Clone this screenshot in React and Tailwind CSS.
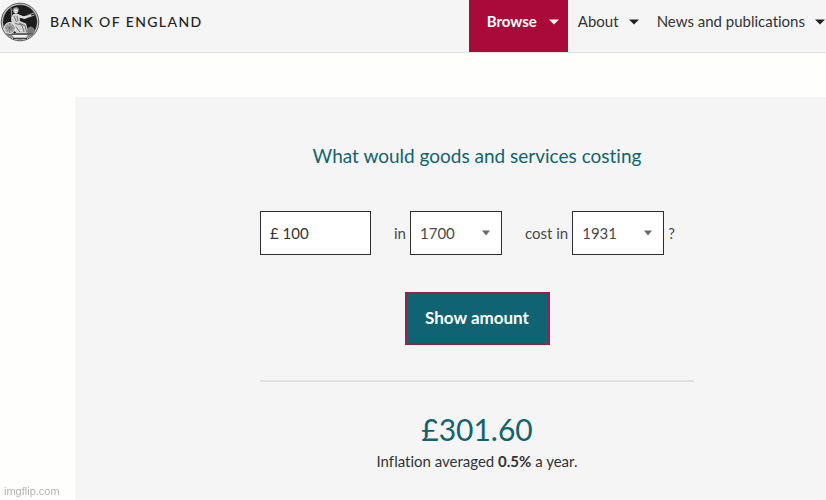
import React, { useState } from "react";

const Logo = () => (
    <svg viewBox="0 0 40 40" className="size-10 shrink-0" aria-hidden="true">
        <circle cx="20" cy="20" r="18.8" fill="#cfcfcf" stroke="#4a4a4a" strokeWidth="0.9" />
        <circle cx="20" cy="20" r="17.2" fill="#1c1c1c" stroke="#888" strokeWidth="0.5" />
        {/* ground */}
        <path d="M5.5 31 H34.5 Q29.5 37.5 20 37.5 Q10.5 37.5 5.5 31Z" fill="#8a8a8a" />
        <path d="M12 33 H28 L26 35.5 H14Z" fill="#f0f0f0" />
        <path d="M7 32 H33 M13 36.5 H27" stroke="#2a2a2a" strokeWidth="0.8" />
        {/* spear */}
        <path d="M11 6 L13 26" stroke="#aaa" strokeWidth="0.9" />
        {/* seated figure */}
        <circle cx="15.8" cy="8.6" r="2.6" fill="#d8d8d8" />
        <path d="M13 9 Q13.5 5.5 17 5.8 L18.5 7.5" stroke="#999" strokeWidth="1.2" fill="none" />
        <path d="M12.8 12.5 L16 11 L19.5 13 L20 19 L26 21.5 L27 25 L28.5 31 L16 31 L12 24 L11 16Z" fill="#d2d2d2" />
        <path d="M17.5 12 L23.5 14.2 L31 12.5 L31.5 14.2 L24.5 17 L18.5 15.5Z" fill="#dedede" />
        <path d="M27 13.5 L34 11 M29 15 L34.5 13" stroke="#b0b0b0" strokeWidth="1" />
        <path d="M14 14 L16.5 20 M17 14 L18 19 M15 21.5 L22 23 L24 30 M19 21 L25 23.5 L26.5 30 M15 24 L20 30" stroke="#4a4a4a" strokeWidth="0.7" fill="none" />
        {/* shield */}
        <circle cx="9.8" cy="26" r="5.5" fill="#adadad" stroke="#eee" strokeWidth="0.9" />
        <path d="M5 26 H14.6 M9.8 21 V31 M6.5 23 L13 29.5 M13 23 L6.5 29.5" stroke="#666" strokeWidth="0.7" />
        {/* coins */}
        <path d="M26.5 31 Q26.5 25 31 24.5 Q35 26 35 30 L34 31Z" fill="#8c8c8c" />
        <path d="M28 28 H34.5 M28 30 H34 M28.5 26 H33" stroke="#444" strokeWidth="0.7" strokeDasharray="1.5 0.7" />
    </svg>
);

const Caret = ({ className }) => (
    <svg viewBox="0 0 10 6" preserveAspectRatio="none" className={className} aria-hidden="true">
        <path d="M0 0.5 H10 L5 5.5Z" fill="currentColor" />
    </svg>
);

const YearSelect = ({ id, value, onChange, years }) => (
    <div className="relative">
        <select
            id={id}
            value={value}
            onChange={onChange}
            className="block h-11 w-[92px] appearance-none border border-[#2d2d2d] bg-white pl-[9px] pr-6 text-[#4a4a4a]"
        >
            {years.map((year) => (
                <option key={year} value={year}>{year}</option>
            ))}
        </select>
        <Caret className="pointer-events-none absolute right-3 top-[19px] h-[6px] w-2 text-[#6a6a6a]" />
    </div>
);

const App = () => {
    const [amount, setAmount] = useState("£ 100");
    const [startYear, setStartYear] = useState("1700");
    const [endYear, setEndYear] = useState("1931");

    return (
        <div className="flex min-h-screen flex-col overflow-x-hidden bg-[#fefefc] font-['Lato',sans-serif] text-[15px] leading-6 text-[#333] [font-variant-ligatures:none]">
            <header className="flex h-[53px] items-start justify-between border-b border-[#e4e4e4] bg-[#f5f5f5]">
                <a href="#" className="flex h-11 items-center gap-[10px] whitespace-nowrap text-sm font-medium tracking-widest text-[#222]">
                    <Logo />
                    BANK OF ENGLAND
                </a>
                <nav className="flex h-[52px] shrink-0 whitespace-nowrap">
                    <a href="#" className="flex items-start gap-3 bg-[#a90a3a] pl-[18px] pr-[9px] pt-[9px] font-bold text-white">
                        Browse
                        <Caret className="mt-[10px] h-[6px] w-[10px]" />
                    </a>
                    <a href="#" className="flex items-start gap-[10px] pl-[10px] pt-[9px]">
                        About
                        <Caret className="mt-[10px] h-[6px] w-[10px] text-[#222]" />
                    </a>
                    <a href="#" className="flex items-start gap-[10px] pl-[18px] pr-[1px] pt-[9px]">
                        News and publications
                        <Caret className="mt-[10px] h-[6px] w-[10px] text-[#222]" />
                    </a>
                </nav>
            </header>

            <main className="ml-[75px] mt-11 grow bg-[#f5f5f5] pb-6 pl-[185px] pr-[132px] pt-[45px] text-center">
                <form onSubmit={(e) => e.preventDefault()}>
                    <h1 className="whitespace-nowrap text-[19px] leading-7 text-[#12636f]">What would goods and services costing</h1>
                    <div className="mt-[41px] flex items-center whitespace-nowrap text-[#4a4a4a]">
                        <input
                            type="text"
                            aria-label="Amount"
                            value={amount}
                            onChange={(e) => setAmount(e.target.value)}
                            className="h-11 w-[111px] border border-[#2d2d2d] bg-white px-[9px] text-[#333]"
                        />
                        <label htmlFor="start-year" className="ml-[23px] mr-1">in</label>
                        <YearSelect id="start-year" value={startYear} onChange={(e) => setStartYear(e.target.value)} years={["1700", "1800", "1900"]} />
                        <label htmlFor="end-year" className="ml-[23px] mr-1">cost in</label>
                        <YearSelect id="end-year" value={endYear} onChange={(e) => setEndYear(e.target.value)} years={["1931", "1980", "2020"]} />
                        <span className="ml-1">?</span>
                    </div>
                    <button type="submit" className="mt-[37px] h-[53px] w-[145px] border-2 border-[#99204c] bg-[#0f6372] pb-[2px] text-[17px] font-bold text-white">
                        Show amount
                    </button>
                </form>
                <hr className="mt-[35px] border-t-2 border-[#e0e0e0]" />
                <output className="mt-[27px] block text-[30px] leading-10 text-[#12636f]">£301.60</output>
                <p>Inflation averaged <b>0.5%</b> a year.</p>
            </main>

            <span className="fixed bottom-[2px] left-1 font-['Liberation_Sans',sans-serif] text-[11px] leading-[14px] text-[#b4b4b4]">imgflip.com</span>
        </div>
    );
};

export default App;
